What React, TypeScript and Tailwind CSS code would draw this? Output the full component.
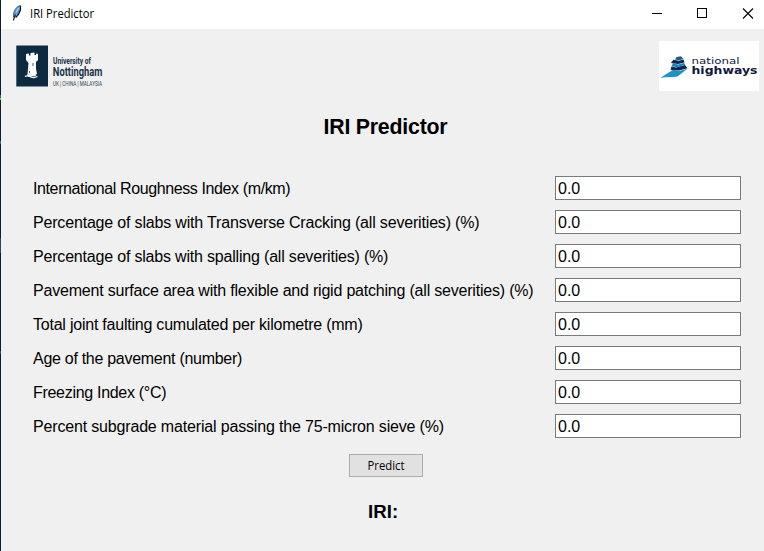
const fields = [
  { label: 'International Roughness Index (m/km)', spacing: 'tracking-[-0.390px]' },
  { label: 'Percentage of slabs with Transverse Cracking (all severities) (%)', spacing: 'tracking-[-0.177px]' },
  { label: 'Percentage of slabs with spalling (all severities) (%)', spacing: 'tracking-[-0.190px]' },
  { label: 'Pavement surface area with flexible and rigid patching (all severities) (%)', spacing: 'tracking-[-0.205px]' },
  { label: 'Total joint faulting cumulated per kilometre (mm)', spacing: 'tracking-[-0.225px]' },
  { label: 'Age of the pavement (number)', spacing: 'tracking-[-0.285px]' },
  { label: 'Freezing Index (°C)', spacing: 'tracking-[-0.300px]' },
  { label: 'Percent subgrade material passing the 75-micron sieve (%)', spacing: 'tracking-[-0.170px]' },
];

function Feather() {
  return (
    <svg width="12" height="17" viewBox="0 0 12 17">
      <path d="M9.500 0.500C6 1 3 5 2.500 9L2.500 12L5 12L7.500 9L9.500 5Z" fill="#5b9ad8" stroke="#2b3f5c" strokeWidth="0.700" />
      <path d="M9.500 1V5L7.500 9.500L5 12.500M4.500 9.500C3.500 11 3 13 2.500 15.500" fill="none" stroke="#0a0d14" strokeWidth="1.100" />
      <path d="M7.500 3L5 7.500" stroke="#a8d0f4" strokeWidth="1.200" />
    </svg>
  );
}

function TitleBar() {
  return (
    <div className="flex h-[29px] shrink-0 items-start bg-white">
      <div className="pl-[10px] pt-[5px]"><Feather /></div>
      <svg className="ml-[6px]" width="90" height="28">
        <text x="1" y="18" fontSize="12" textLength="64" lengthAdjust="spacingAndGlyphs" className="font-['Open_Sans',sans-serif]">IRI Predictor</text>
      </svg>
      <svg className="ml-auto" width="120" height="28" shapeRendering="crispEdges" fill="none" stroke="#000">
        <path d="M8 13.500H18" />
        <rect x="53.500" y="8.500" width="9" height="9" />
        <path d="M99 8.500L109 18.500M109 8.500L99 18.500" strokeWidth="1.100" shapeRendering="auto" />
      </svg>
    </div>
  );
}

function NottinghamLogo() {
  return (
    <svg width="90" height="44" viewBox="0 0 90 44" fill="#1b3347" className="overflow-visible font-['Roboto',sans-serif]">
      <rect x="0.300" y="0.500" width="31.700" height="41" fill="#0d2a40" />
      <path d="M10 9L13 8.500V10.500H14.500V8L18.500 7.500V10H20V8.500L22 9V15L20 17V24L21 29L18 30.500L11.500 29L12.500 18L10 15Z" fill="#fff" />
      <path d="M17 18V21M13.500 26V28" stroke="#49606f" strokeWidth="1" />
      <path d="M9 31.500C12 29 15 33 18 32.500L21.500 31.500M11 30C14 29 17 32 20 30" fill="none" stroke="#fff" strokeWidth="1.300" />
      <text x="37" y="18.500" fontSize="8.800" fontWeight="700" textLength="38" lengthAdjust="spacingAndGlyphs">University of</text>
      <text x="36.800" y="30.700" fontSize="12.300" fontWeight="700" textLength="49.500" lengthAdjust="spacingAndGlyphs">Nottingham</text>
      <text x="37" y="41" fontSize="6.400" fill="#2f4252" textLength="49" lengthAdjust="spacingAndGlyphs">UK | CHINA | MALAYSIA</text>
    </svg>
  );
}

function HighwaysLogo() {
  return (
    <svg width="100" height="50" viewBox="0 0 100 50" className="bg-white font-['DejaVu_Sans',sans-serif]" fill="#10183d">
      <path d="M1.500 36.700L13 29.500L20 30L28.500 27.800L18.500 35.500C13 36.500 8 35.500 1.500 36.700Z" fill="#1b93c4" />
      <path d="M11.500 28.500L12.500 25.500L17 26.500L26 24L28.500 27.200L20 29.500L14 29.500Z" fill="#0c2752" />
      <path d="M12.500 25.200L14 22.500L19 23.500L25 22L26.300 23.700L18 26.200Z" fill="#1684b4" />
      <path d="M12 21.500L14.500 18.800L20 19.700L24.500 18.500L25.500 21.500L19 23L13 22.300Z" fill="#0c2752" />
      <path d="M16 18.500L17.500 16L22 15.200L24.500 18L20 19.300Z" fill="#195b8c" />
      <text x="32.500" y="22.500" fontSize="9.500" textLength="48" lengthAdjust="spacingAndGlyphs">national</text>
      <text x="32.500" y="33.200" fontSize="10.500" fontWeight="700" textLength="66" lengthAdjust="spacingAndGlyphs">highways</text>
    </svg>
  );
}

export default function App() {
  return (
    <div className="flex h-[551px] w-[764px] overflow-hidden bg-[#f0f0f0] font-['Liberation_Sans',Arial,sans-serif] text-black">
      <div className="flex w-px shrink-0 flex-col bg-[#141b2b]">
        <div className="mt-[95px] h-[3px] bg-[#16756f]" />
        <div className="h-[2px] bg-[#65d956]" />
        <div className="mt-[41px] h-[3px] bg-[#1a7676]" />
        <div className="mt-[94px] h-[15px] bg-[#3b4352]" />
        <div className="mt-[98px] h-[3px] bg-[#17508d]" />
      </div>
      <div className="flex min-w-0 flex-1 flex-col">
        <TitleBar />
        <div className="flex h-[73px] justify-between pl-[15px] pr-[5px]">
          <div className="pt-4"><NottinghamLogo /></div>
          <div className="pt-3"><HighwaysLogo /></div>
        </div>
        <h1 className="h-[74px] pl-[322.500px] pt-[9px] text-[21.300px] font-bold leading-8 tracking-[-0.210px]">IRI Predictor</h1>
        <form className="flex flex-col gap-[10px] pl-8 pr-[23px]">
          {fields.map((f) => (
            <label key={f.label} className="flex h-6 items-center justify-between whitespace-nowrap text-base leading-6">
              <span className={`pt-[2px] ${f.spacing}`}>{f.label}</span>
              <input defaultValue="0.0" className="h-6 w-[186px] border border-[#7a7a7a] bg-white px-[2px] pt-[2px] outline-none" />
            </label>
          ))}
        </form>
        <button className="ml-[348px] mt-4 flex h-[23px] w-[74px] shrink-0 items-center justify-center border border-[#adadad] bg-[#e1e1e1]">
          <svg width="40" height="18">
            <text x="1.500" y="13" fontSize="12" textLength="37" lengthAdjust="spacingAndGlyphs" className="font-['Open_Sans',sans-serif]">Predict</text>
          </svg>
        </button>
        <div className="pl-[367px] pt-[23px] text-[18.700px] font-bold leading-6">IRI:</div>
      </div>
    </div>
  );
}
